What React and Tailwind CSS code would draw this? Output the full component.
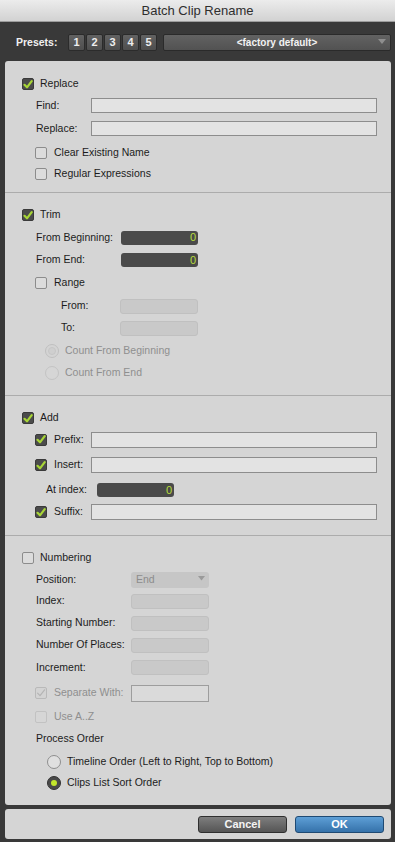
import React from "react";

const FONT = { fontFamily: '"Liberation Sans", Arial, sans-serif' };

function Check({ checked = false, disabled = false }) {
  if (checked && !disabled) {
    return (
      <div className="w-[12px] h-[12px] rounded-[2px] bg-[#4b4b4b] border border-[#3a3a3a] flex items-center justify-center shrink-0">
        <svg width="11" height="11" viewBox="0 0 10 10">
          <path d="M1.5 5.3 L4 7.8 L8.7 1.7" fill="none" stroke="#a8d636" strokeWidth="2.2" strokeLinecap="round" strokeLinejoin="round" />
        </svg>
      </div>
    );
  }
  if (checked && disabled) {
    return (
      <div className="w-[12px] h-[12px] rounded-[2px] bg-[#d3d3d3] border border-[#b9b9b9] flex items-center justify-center shrink-0">
        <svg width="10" height="10" viewBox="0 0 10 10">
          <path d="M1.6 5.2 L4 7.6 L8.6 1.8" fill="none" stroke="#b4b4b4" strokeWidth="1.2" strokeLinecap="round" strokeLinejoin="round" />
        </svg>
      </div>
    );
  }
  return (
    <div
      className={
        "w-[12px] h-[12px] rounded-[2px] shrink-0 border " +
        (disabled ? "border-[#c2c2c2] bg-[#d6d6d6]" : "border-[#8c8c8c] bg-[#dcdcdc]")
      }
    />
  );
}

function Radio({ selected = false, disabled = false }) {
  if (selected && !disabled) {
    return (
      <div className="w-[14px] h-[14px] rounded-full bg-[#4a4a4a] border border-[#333] flex items-center justify-center shrink-0">
        <div className="w-[6px] h-[6px] rounded-full bg-[#c3e62c]" />
      </div>
    );
  }
  if (selected && disabled) {
    return (
      <div className="w-[14px] h-[14px] rounded-full border border-[#c0c0c0] bg-[#d4d4d4] flex items-center justify-center shrink-0">
        <div className="w-[8px] h-[8px] rounded-full border border-[#c6c6c6] bg-[#cfcfcf]" />
      </div>
    );
  }
  return (
    <div
      className={
        "w-[14px] h-[14px] rounded-full border shrink-0 " +
        (disabled ? "border-[#c4c4c4] bg-[#d6d6d6]" : "border-[#8e8e8e] bg-[#e0e0e0]")
      }
    />
  );
}

function TextInput({ h = "h-[15px]" }) {
  return <div className={"flex-1 mr-[14px] bg-[#e3e3e3] border border-[#8d8d8d] " + h} />;
}

function DarkInput({ w = "w-[77px]" }) {
  return (
    <div className={"h-[14px] rounded-[3px] bg-[#4a4a4a] flex items-center justify-end pr-[2px] " + w}>
      <span className="text-[11px] leading-none text-[#b7dd3b]">0</span>
    </div>
  );
}

function DisInput({ w = "w-[78px]", h = "h-[15px]" }) {
  return <div className={"rounded-[3px] bg-[#c9c9c9] border border-[#c0c0c0] " + w + " " + h} />;
}

export default function App() {
  return (
    <div className="w-[395px] h-[842px] bg-[#393939] flex flex-col overflow-hidden text-[10.5px] text-[#1c1c1c]" style={FONT}>
      {/* Title bar */}
      <div className="h-[22px] shrink-0 bg-gradient-to-b from-[#ececec] to-[#d2d2d2] border-b border-[#9c9c9c] flex items-center justify-center">
        <span className="text-[13px] text-[#2e2e2e]">Batch Clip Rename</span>
      </div>

      {/* Presets row */}
      <div className="h-[39px] shrink-0 flex items-center pl-[16px] pr-[4px] pt-[2px]">
        <span className="text-[10.5px] font-bold text-[#f0f0f0] w-[52px]">Presets:</span>
        <div className="flex gap-[1px]">
          {["1", "2", "3", "4", "5"].map((n) => (
            <div
              key={n}
              className="w-[17px] h-[17px] bg-gradient-to-b from-[#626262] to-[#4e4e4e] border border-[#2b2b2b] rounded-[2px] flex items-center justify-center text-[11px] font-bold text-[#eeeeee]"
            >
              {n}
            </div>
          ))}
        </div>
        <div className="ml-[6px] flex-1 h-[17px] bg-gradient-to-b from-[#626262] to-[#525252] border border-[#2a2a2a] rounded-[2px] relative flex items-center justify-center">
          <span className="text-[10px] font-bold text-[#f2f2f2]">&lt;factory default&gt;</span>
          <svg className="absolute right-[4px] top-[4px]" width="8" height="6" viewBox="0 0 8 6">
            <path d="M0 0 L8 0 L4 5 Z" fill="#8e8e8e" />
          </svg>
        </div>
      </div>

      {/* Main panel */}
      <div className="h-[744px] shrink-0 ml-[5px] mr-[4px] bg-[#d5d5d5] rounded-[3px] flex flex-col">
        {/* Section: Replace */}
        <div className="pt-[12px] h-[131px] flex flex-col">
          <div className="h-[22px] flex items-center pl-[17px] gap-[6px]">
            <Check checked />
            <span>Replace</span>
          </div>
          <div className="h-[21px] flex items-center pl-[31px]">
            <span className="w-[55px]">Find:</span>
            <TextInput />
          </div>
          <div className="h-[25px] flex items-center pl-[31px]">
            <span className="w-[55px]">Replace:</span>
            <TextInput />
          </div>
          <div className="h-[23px] flex items-center pl-[30px] gap-[7px]">
            <Check />
            <span>Clear Existing Name</span>
          </div>
          <div className="h-[20px] flex items-center pl-[30px] gap-[7px]">
            <Check />
            <span>Regular Expressions</span>
          </div>
        </div>

        {/* Section: Trim */}
        <div className="border-t border-[#acacac] pt-[11px] h-[203px] flex flex-col">
          <div className="h-[22px] flex items-center pl-[17px] gap-[6px]">
            <Check checked />
            <span>Trim</span>
          </div>
          <div className="h-[23px] flex items-center pl-[31px]">
            <span className="w-[85px]">From Beginning:</span>
            <DarkInput />
          </div>
          <div className="h-[22px] flex items-center pl-[31px]">
            <span className="w-[85px]">From End:</span>
            <DarkInput />
          </div>
          <div className="h-[24px] flex items-center pl-[30px] gap-[7px]">
            <Check />
            <span>Range</span>
          </div>
          <div className="h-[22px] flex items-center pl-[56px]">
            <span className="w-[59px]">From:</span>
            <DisInput />
          </div>
          <div className="h-[22px] flex items-center pl-[56px]">
            <span className="w-[59px]">To:</span>
            <DisInput />
          </div>
          <div className="h-[23px] flex items-center pl-[40px] gap-[6px] text-[#8f8f8f]">
            <Radio selected disabled />
            <span>Count From Beginning</span>
          </div>
          <div className="h-[22px] flex items-center pl-[40px] gap-[6px] text-[#8f8f8f]">
            <Radio disabled />
            <span>Count From End</span>
          </div>
        </div>

        {/* Section: Add */}
        <div className="border-t border-[#acacac] pt-[12px] h-[140px] flex flex-col">
          <div className="h-[20px] flex items-center pl-[17px] gap-[6px]">
            <Check checked />
            <span>Add</span>
          </div>
          <div className="h-[23px] flex items-center pl-[30px]">
            <Check checked />
            <span className="ml-[7px] w-[37px]">Prefix:</span>
            <TextInput h="h-[16px]" />
          </div>
          <div className="h-[28px] flex items-center pl-[30px]">
            <Check checked />
            <span className="ml-[7px] w-[37px]">Insert:</span>
            <TextInput h="h-[16px]" />
          </div>
          <div className="h-[22px] flex items-center pl-[41px]">
            <span className="w-[51px]">At index:</span>
            <DarkInput />
          </div>
          <div className="h-[22px] flex items-center pl-[30px]">
            <Check checked />
            <span className="ml-[7px] w-[37px]">Suffix:</span>
            <TextInput h="h-[16px]" />
          </div>
        </div>

        {/* Section: Numbering */}
        <div className="border-t border-[#acacac] pt-[11px] flex-1 flex flex-col">
          <div className="h-[22px] flex items-center pl-[17px] gap-[6px]">
            <Check />
            <span>Numbering</span>
          </div>
          <div className="h-[21px] flex items-center pl-[31px]">
            <span className="w-[95px]">Position:</span>
            <div className="w-[78px] h-[16px] rounded-[3px] bg-[#c6c6c6] relative flex items-center pl-[5px]">
              <span className="text-[#8c8c8c]">End</span>
              <svg className="absolute right-[4px] top-[4px]" width="7" height="5" viewBox="0 0 7 5">
                <path d="M0 0 L7 0 L3.5 4.5 Z" fill="#9a9a9a" />
              </svg>
            </div>
          </div>
          <div className="h-[22px] flex items-center pl-[31px]">
            <span className="w-[95px]">Index:</span>
            <DisInput />
          </div>
          <div className="h-[22px] flex items-center pl-[31px]">
            <span className="w-[95px]">Starting Number:</span>
            <DisInput />
          </div>
          <div className="h-[22px] flex items-center pl-[31px]">
            <span className="w-[95px]">Number Of Places:</span>
            <DisInput />
          </div>
          <div className="h-[23px] flex items-center pl-[31px]">
            <span className="w-[95px]">Increment:</span>
            <DisInput />
          </div>
          <div className="h-[28px] flex items-center pl-[30px]">
            <Check checked disabled />
            <span className="ml-[7px] w-[77px] text-[#8f8f8f]">Separate With:</span>
            <div className="w-[78px] h-[17px] bg-[#dadada] border border-[#9d9d9d]" />
          </div>
          <div className="h-[19px] flex items-center pl-[30px] gap-[7px] text-[#8f8f8f]">
            <Check disabled />
            <span>Use A..Z</span>
          </div>
          <div className="h-[25px] flex items-center pl-[31px]">
            <span>Process Order</span>
          </div>
          <div className="h-[21px] flex items-center pl-[42px] gap-[6px]">
            <Radio />
            <span>Timeline Order (Left to Right, Top to Bottom)</span>
          </div>
          <div className="h-[22px] flex items-center pl-[42px] gap-[6px]">
            <Radio selected />
            <span>Clips List Sort Order</span>
          </div>
        </div>
      </div>

      {/* Bottom bar */}
      <div className="mt-[4px] h-[30px] shrink-0 ml-[5px] mr-[4px] bg-[#d5d5d5] rounded-[3px] flex items-center justify-end pr-[7px] gap-[8px]">
        <div className="w-[89px] h-[17px] rounded-[3px] border border-[#2f2f2f] bg-gradient-to-b from-[#7e7e7e] to-[#555555] flex items-center justify-center text-[11px] font-bold text-[#f4f4f4]">
          Cancel
        </div>
        <div className="w-[89px] h-[17px] rounded-[3px] border border-[#1f4a73] bg-gradient-to-b from-[#5e9fd6] to-[#3572aa] flex items-center justify-center text-[11px] font-bold text-white">
          OK
        </div>
      </div>
    </div>
  );
}
